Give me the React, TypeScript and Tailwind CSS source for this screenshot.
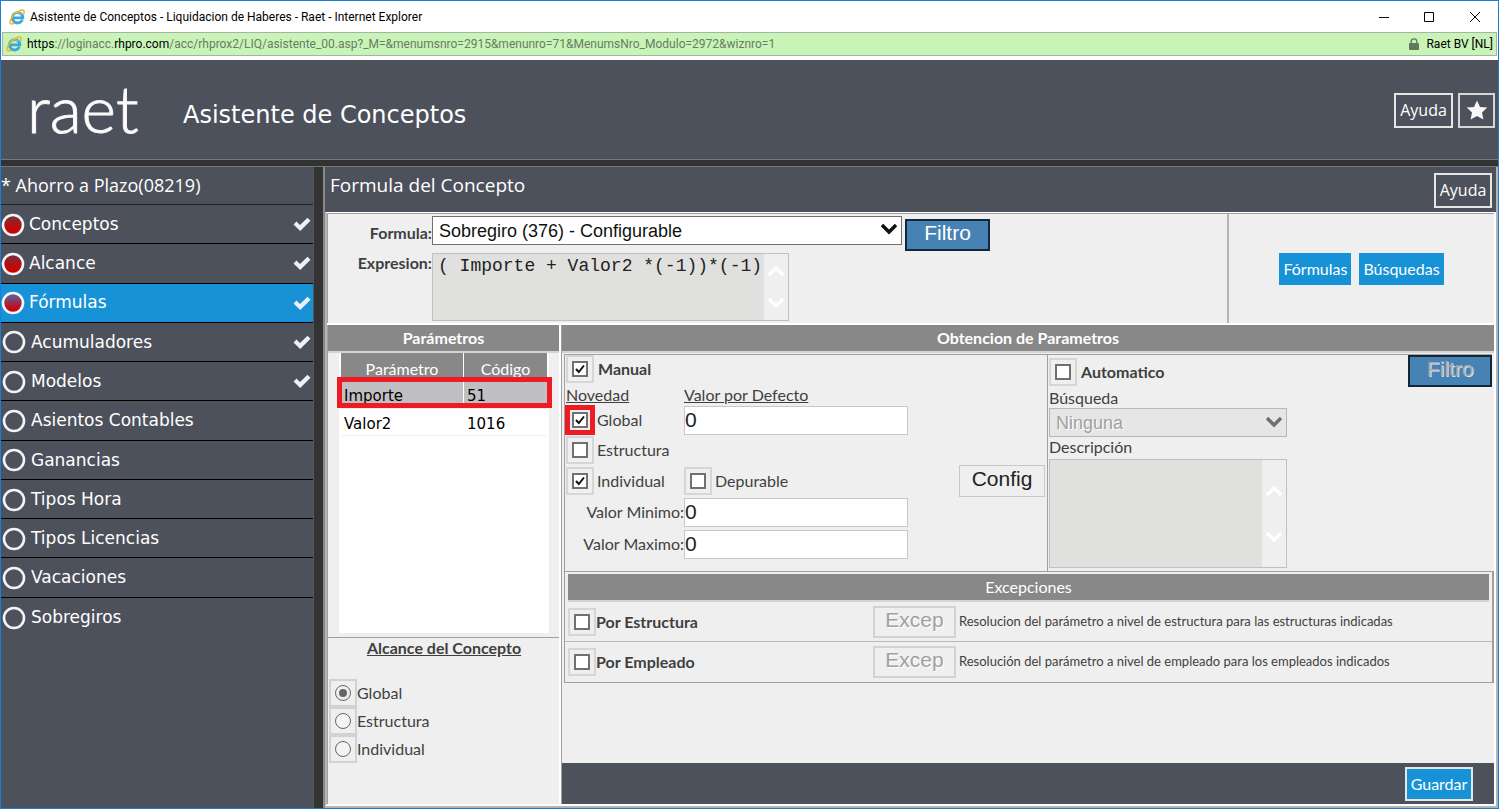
import { useState, type ReactNode } from 'react';

interface Step {
    label: string;
    state: 'done' | 'idle';
    checked: boolean;
}

const STEPS: Step[] = [
    { label: 'Conceptos', state: 'done', checked: true },
    { label: 'Alcance', state: 'done', checked: true },
    { label: 'Fórmulas', state: 'done', checked: true },
    { label: 'Acumuladores', state: 'idle', checked: true },
    { label: 'Modelos', state: 'idle', checked: true },
    { label: 'Asientos Contables', state: 'idle', checked: false },
    { label: 'Ganancias', state: 'idle', checked: false },
    { label: 'Tipos Hora', state: 'idle', checked: false },
    { label: 'Tipos Licencias', state: 'idle', checked: false },
    { label: 'Vacaciones', state: 'idle', checked: false },
    { label: 'Sobregiros', state: 'idle', checked: false },
];

const PARAMS = [
    { name: 'Importe', code: '51' },
    { name: 'Valor2', code: '1016' },
];

function ExplorerIcon() {
    return (
        <svg viewBox="0 0 16 16" className="size-4 shrink-0" fill="none" aria-hidden="true">
            <path d="M13.4 10.8A5.2 5.2 0 1 1 13.8 8.8H4.4" stroke="#3aa5de" strokeWidth="2.8" />
            <path d="M12.6 6.2A4.6 4.6 0 0 0 4.4 6" stroke="#8fdcfa" strokeWidth="1" />
            <path d="M14.6 5.2C15.6 3 15.4 1 13.4 1C9.4 1 1.2 8.4 1 13.2C1 15.2 3 15.4 5.4 14" stroke="#f2b90f" strokeWidth="1.5" />
        </svg>
    );
}

function TickIcon() {
    return (
        <svg viewBox="0 0 18 15" className="mr-[2px] h-[15px] w-[18px] shrink-0" aria-hidden="true">
            <path d="M0.5 7.5L3.5 4.5L7 8L14.5 0.8L17.5 3.8L7.2 14Z" fill="#eef0f6" />
        </svg>
    );
}

function StepDot({ state, active }: { state: Step['state']; active: boolean }) {
    return (
        <svg viewBox="0 0 24 24" className="size-6 shrink-0" aria-hidden="true">
            <defs>
                <linearGradient id="dot-red" x1="0" y1="0" x2="0" y2="1">
                    <stop offset="0.1" stopColor="#7a2e38" />
                    <stop offset="0.7" stopColor="#c90505" />
                    <stop offset="1" stopColor="#c80000" />
                </linearGradient>
                <linearGradient id="dot-active" x1="0" y1="0" x2="0" y2="1">
                    <stop offset="0.1" stopColor="#5a6098" />
                    <stop offset="0.7" stopColor="#bb1220" />
                    <stop offset="1" stopColor="#c80000" />
                </linearGradient>
            </defs>
            <circle
                cx="12"
                cy="12"
                r="10"
                stroke="#f4f4f6"
                strokeWidth="2.6"
                fill={state === 'idle' ? 'none' : active ? 'url(#dot-active)' : 'url(#dot-red)'}
            />
        </svg>
    );
}

function Chevron({ up, className }: { up?: boolean; className: string }) {
    return (
        <svg viewBox="0 0 16 12" className={className} fill="none" stroke="currentColor" strokeWidth="3.4" aria-hidden="true">
            <path d={up ? 'M1 10L8 3L15 10' : 'M1 2L8 9L15 2'} />
        </svg>
    );
}

function TickBox({ id, checked = false, marked = false }: { id: string; checked?: boolean; marked?: boolean }) {
    return (
        <span className="relative flex size-[28px] shrink-0 items-center justify-center border-2 border-[#d6d6d6] bg-[#efefef]">
            <input
                id={id}
                type="checkbox"
                defaultChecked={checked}
                className="peer size-4 appearance-none border-2 border-[#707070] bg-white"
            />
            <svg viewBox="0 0 10 10" className="pointer-events-none absolute hidden size-[10px] peer-checked:block" fill="none" aria-hidden="true">
                <path d="M1 5L3.8 8L9 1.5" stroke="#111" strokeWidth="2" />
            </svg>
            {marked && <span className="pointer-events-none absolute -inset-[3px] border-5 border-[#ed1c24]" />}
        </span>
    );
}

function GridHeader({ children, bold = true }: { children: ReactNode; bold?: boolean }) {
    return (
        <h2 className={`flex h-[28px] items-center justify-center border-b-2 border-[#d4d4d4] bg-[#888888] text-[16px] text-white ${bold ? 'font-bold' : ''}`}>
            {children}
        </h2>
    );
}

function NumberBox({ id }: { id: string }) {
    return (
        <input
            id={id}
            defaultValue="0"
            className="h-[29px] w-[224px] border border-[#c8c8c8] bg-white pb-px font-['Liberation_Sans',sans-serif] text-[21px] text-[#222]"
        />
    );
}

function ScrollColumn({ gap }: { gap: string }) {
    return (
        <div className={`flex w-[24px] flex-col items-center justify-center bg-[#efefef] text-white ${gap}`}>
            <Chevron up className="h-3 w-4" />
            <Chevron className="h-3 w-4" />
        </div>
    );
}

function ExceptionRow({ id, label, text }: { id: string; label: string; text: string }) {
    return (
        <div className="flex h-[40px] items-center border-b border-[#b8b8b8] pl-[3px] last:border-b-0">
            <TickBox id={id} />
            <label htmlFor={id} className="w-[277px] text-[16px] font-bold">{label}</label>
            <button
                type="button"
                disabled
                className="h-[32px] w-[83px] border-2 border-[#d2d2d2] pb-1 font-['Liberation_Sans',sans-serif] text-[21px] leading-6 text-[#a0a0a0] [text-shadow:1px_1px_0_white]"
            >
                Excep
            </button>
            <p className="ml-[3px] text-[13px]">{text}</p>
        </div>
    );
}

export default function App() {
    const [active, setActive] = useState('Fórmulas');

    return (
        <div className="flex min-h-screen flex-col border border-[#1a7fd4] bg-white font-['Lato',sans-serif] text-[#3f3f3f]">
            <div className="flex h-[31px] items-center pl-2 font-['Roboto',sans-serif] text-[12px] text-black">
                <ExplorerIcon />
                <span className="ml-[5px]">Asistente de Conceptos - Liquidacion de Haberes - Raet - Internet Explorer</span>
                <div className="ml-auto flex">
                    <button type="button" aria-label="Minimizar" className="flex h-[28px] w-[45px] items-center justify-center">
                        <svg viewBox="0 0 10 10" className="size-[10px]" stroke="black"><path d="M0 5.5H10" /></svg>
                    </button>
                    <button type="button" aria-label="Maximizar" className="flex h-[28px] w-[46px] items-center justify-center">
                        <svg viewBox="0 0 10 10" className="size-[10px]" stroke="black" fill="none"><path d="M.5 .5H9.5V9.5H.5Z" /></svg>
                    </button>
                    <button type="button" aria-label="Cerrar" className="flex h-[28px] w-[46px] items-center justify-center">
                        <svg viewBox="0 0 10 10" className="size-[10px]" stroke="black"><path d="M0 0L10 10M10 0L0 10" /></svg>
                    </button>
                </div>
            </div>

            <div className="mx-px mb-1 flex h-[24px] items-center border border-[#a9b3a5] bg-[#c8f4b8] px-[3px] font-['Roboto',sans-serif] text-[12px] text-[#6a7b64]">
                <ExplorerIcon />
                <span className="ml-[5px] whitespace-nowrap">
                    <span className="text-black">https</span>://loginacc.<span className="text-black">rhpro.com</span>
                    /acc/rhprox2/LIQ/asistente_00.asp?_M=&amp;menumsnro=2915&amp;menunro=71&amp;MenumsNro_Modulo=2972&amp;wiznro=1
                </span>
                <svg viewBox="0 0 10 12" className="ml-auto h-3 w-[10px] shrink-0" aria-hidden="true">
                    <rect y="5" width="10" height="7" rx="1" fill="#5f7a58" />
                    <path d="M2.2 5.5V3.4A2.8 2.6 0 0 1 7.8 3.4V5.5" stroke="#5f7a58" strokeWidth="1.3" fill="none" />
                </svg>
                <span className="ml-[7px] whitespace-nowrap text-black">Raet BV [NL]</span>
            </div>

            <header className="flex h-[99px] items-center bg-[#4d515c] pr-[3px] text-white">
                <span className="ml-[26px] w-[156px] pb-1 text-[66px] leading-[80px] font-light [-webkit-text-stroke:1px_#f4f4f6]">raet</span>
                <h1 className="pt-[10px] font-['DejaVu_Sans',sans-serif] text-[24px]">Asistente de Conceptos</h1>
                <div className="ml-auto flex gap-[5px] pt-px font-['Open_Sans',sans-serif]">
                    <button type="button" className="h-[35px] w-[59px] border-2 border-[#e6e6e6] text-[16px] leading-5">Ayuda</button>
                    <button type="button" aria-label="Favoritos" className="flex h-[35px] w-[37px] items-center justify-center border-2 border-[#d6d6d6]">
                        <svg viewBox="0 0 22 20" className="h-5 w-[22px]" fill="#f8f8f8">
                            <path d="M11 .4L14 6.9L21.3 7.6L16 12.4L17.4 19.6L11 15.9L4.6 19.6L6 12.4L.7 7.6L8 6.9Z" />
                        </svg>
                    </button>
                </div>
            </header>

            <div className="h-[8px] border-y border-[#777] bg-[#333]" />

            <div className="flex flex-1 bg-[#4d515c]">
                <nav className="w-[312px] shrink-0 text-white">
                    <p className="flex h-[38px] items-center border-b border-[#222] font-['Open_Sans',sans-serif] text-[18px]">* Ahorro a Plazo(08219)</p>
                    <ul className="grid h-[432px] auto-rows-fr font-['DejaVu_Sans',sans-serif] text-[17px]">
                        {STEPS.map((step) => (
                            <li key={step.label} className="border-b border-black last:border-b-0">
                                <button
                                    type="button"
                                    onClick={() => setActive(step.label)}
                                    className={`flex size-full items-center pt-px text-left ${active === step.label ? 'bg-[#1892d6]' : ''} ${step.state === 'idle' ? 'gap-[5px] pl-px' : 'gap-1'}`}
                                >
                                    <StepDot state={step.state} active={active === step.label} />
                                    <span className="flex-1">{step.label}</span>
                                    {step.checked && <TickIcon />}
                                </button>
                            </li>
                        ))}
                    </ul>
                </nav>
                <div className="w-[12px] shrink-0 border-r-2 border-l border-r-[#888] border-l-[#555] bg-[#333]" />

                <main className="flex min-w-0 flex-1 flex-col border-r-2 border-b-2 border-[#b4b4b4]">
                    <div className="flex h-[45px] items-center justify-between border-l border-[#4d515c] pr-1 pl-1 font-['Open_Sans',sans-serif] text-white">
                        <h2 className="pb-2 text-[19px]">Formula del Concepto</h2>
                        <button type="button" className="mt-px h-[35px] w-[58px] border-2 border-[#e6e6e6] text-[16px] leading-5">Ayuda</button>
                    </div>

                    <div className="flex flex-1 flex-col border-2 border-t border-white border-l-[#b4b4b4] bg-[#efefef]">
                        <section className="flex h-[112px] border-t border-b-2 border-t-[#a0a0a0] border-b-white">
                            <div className="flex-1 border-l border-[#a0a0a0] pt-[2px]">
                                <div className="flex h-[37px] items-start">
                                    <label htmlFor="formula" className="w-[104px] pt-[5px] text-right text-[16px] font-bold">Formula:</label>
                                    <div className="relative">
                                        <select id="formula" className="h-[29px] w-[470px] appearance-none border border-[#707070] bg-white px-[6px] font-['Liberation_Sans',sans-serif] text-[18px] leading-5 text-[#111]">
                                            <option>Sobregiro (376) - Configurable</option>
                                        </select>
                                        <Chevron className="pointer-events-none absolute top-[7px] right-[5px] h-3 w-4 text-[#111]" />
                                    </div>
                                    <button type="button" className="mt-[3px] ml-[3px] h-[32px] w-[85px] border-2 border-[#152636] bg-[#4682b4] pb-1 font-['Liberation_Sans',sans-serif] text-[21px] leading-6 text-white">
                                        Filtro
                                    </button>
                                </div>
                                <div className="flex items-start">
                                    <label htmlFor="expresion" className="w-[104px] text-right text-[16px] leading-5 font-bold">Expresion:</label>
                                    <div className="flex h-[68px] w-[357px] border border-[#c0c0c0]">
                                        <textarea
                                            id="expresion"
                                            readOnly
                                            defaultValue="( Importe + Valor2 *(-1))*(-1)"
                                            className="min-w-0 flex-1 resize-none overflow-hidden bg-[#e0e0df] pl-[5px] font-['Liberation_Mono',monospace] text-[18px] leading-6 whitespace-nowrap text-[#222]"
                                        />
                                        <ScrollColumn gap="gap-5" />
                                    </div>
                                </div>
                            </div>
                            <div className="flex w-[267px] items-center justify-center gap-2 border-l-2 border-[#b4b4b4] text-[16px] text-white">
                                <button type="button" className="h-[32px] bg-[#1892d6] px-1">Fórmulas</button>
                                <button type="button" className="h-[32px] bg-[#1892d6] px-1">Búsquedas</button>
                            </div>
                        </section>

                        <div className="flex flex-1">
                            <section className="flex w-[234px] shrink-0 flex-col border-r-2 border-l border-r-white border-l-[#a0a0a0]">
                                <GridHeader>Parámetros</GridHeader>
                                <div className="relative mr-[10px] ml-[11px] h-[280px] bg-white px-px">
                                    <table className="w-full table-fixed border-separate border-spacing-x-[1px] border-spacing-y-0 font-['DejaVu_Sans',sans-serif] text-[15px] text-black">
                                        <thead>
                                            <tr className="h-[28px] bg-[#888888] font-['Lato',sans-serif] text-[16px] text-white">
                                                <th className="w-[122px] pt-1 font-normal">Parámetro</th>
                                                <th className="pt-1 font-normal">Código</th>
                                            </tr>
                                        </thead>
                                        <tbody>
                                            {PARAMS.map((param) => (
                                                <tr key={param.name} className="h-[27px] first:bg-[#c0c0c2]">
                                                    <td className="border-b border-[#efefef] p-0 pt-1 pl-[3px]">{param.name}</td>
                                                    <td className="border-b border-[#efefef] p-0 pt-1 pl-[3px]">{param.code}</td>
                                                </tr>
                                            ))}
                                        </tbody>
                                    </table>
                                    <span className="pointer-events-none absolute top-[24px] -right-[3px] -left-[2px] h-[31px] border-5 border-[#ed1c24]" />
                                </div>
                                <fieldset className="mt-1 border-t border-[#a0a0a0] pl-px text-[16px]">
                                    <h3 className="mb-[21px] text-center leading-5 font-bold underline">Alcance del Concepto</h3>
                                    {['Global', 'Estructura', 'Individual'].map((scope, i) => (
                                        <label key={scope} className="flex h-[28px] items-center">
                                            <span className="flex size-[28px] items-center justify-center border-2 border-[#d2d2d2]">
                                                <input
                                                    type="radio"
                                                    name="alcance"
                                                    defaultChecked={i === 0}
                                                    className="size-4 appearance-none rounded-full border border-[#666] bg-[#f4f4f4] p-[3px] checked:bg-[#666] checked:bg-clip-content"
                                                />
                                            </span>
                                            {scope}
                                        </label>
                                    ))}
                                </fieldset>
                            </section>

                            <section className="flex min-w-0 flex-1 flex-col border-l border-[#a0a0a0]">
                                <GridHeader>Obtencion de Parametros</GridHeader>
                                <div className="mt-px flex h-[217px] pr-[2px] pl-[2px]">
                                    <div className="flex-1 border-t border-l border-[#a0a0a0] pl-px text-[16px]">
                                        <div className="flex items-center gap-1">
                                            <TickBox id="manual" checked />
                                            <label htmlFor="manual" className="leading-6 font-bold">Manual</label>
                                        </div>
                                        <div className="flex h-[22px] leading-6 underline">
                                            <span className="w-[118px]">Novedad</span>
                                            <label htmlFor="defecto">Valor por Defecto</label>
                                        </div>
                                        <div className="flex h-[30px] items-center">
                                            <TickBox id="global" checked marked />
                                            <label htmlFor="global" className="w-[90px] pl-[3px]">Global</label>
                                            <NumberBox id="defecto" />
                                        </div>
                                        <div className="flex h-[30px] items-center">
                                            <TickBox id="estructura" />
                                            <label htmlFor="estructura" className="pl-[3px]">Estructura</label>
                                        </div>
                                        <div className="flex h-[31px] items-center">
                                            <TickBox id="individual" checked />
                                            <label htmlFor="individual" className="w-[90px] pl-[3px]">Individual</label>
                                            <TickBox id="depurable" />
                                            <label htmlFor="depurable" className="pl-[3px]">Depurable</label>
                                            <button type="button" className="mr-[2px] ml-auto h-[32px] w-[86px] border border-[#c8c8c8] pb-1 font-['Liberation_Sans',sans-serif] text-[21px] leading-6 text-[#222]">
                                                Config
                                            </button>
                                        </div>
                                        <div className="flex h-[32px] items-center">
                                            <label htmlFor="minimo" className="w-[118px] text-right">Valor Minimo:</label>
                                            <NumberBox id="minimo" />
                                        </div>
                                        <div className="flex h-[32px] items-center">
                                            <label htmlFor="maximo" className="w-[118px] text-right">Valor Maximo:</label>
                                            <NumberBox id="maximo" />
                                        </div>
                                    </div>

                                    <div className="flex w-[445px] items-start justify-between border-t border-l border-[#a0a0a0] text-[16px]">
                                        <div className="pl-px">
                                            <div className="flex items-center gap-1 pt-[3px]">
                                                <TickBox id="automatico" />
                                                <label htmlFor="automatico" className="font-bold">Automatico</label>
                                            </div>
                                            <label htmlFor="busqueda" className="block h-[22px] leading-6">Búsqueda</label>
                                            <div className="relative">
                                                <select id="busqueda" disabled className="h-[29px] w-[238px] appearance-none border border-[#b8b8b8] bg-[#e6e6e6] px-[6px] font-['Liberation_Sans',sans-serif] text-[18px] leading-5 text-[#a0a0a0] opacity-100 [text-shadow:1px_1px_0_white]">
                                                    <option>Ninguna</option>
                                                </select>
                                                <Chevron className="pointer-events-none absolute top-2 right-[5px] h-3 w-4 text-[#707070]" />
                                            </div>
                                            <label htmlFor="descripcion" className="block h-[22px] leading-5">Descripción</label>
                                            <div className="flex h-[109px] w-[238px] border border-[#c0c0c0]">
                                                <textarea id="descripcion" readOnly className="min-w-0 flex-1 resize-none bg-[#e0e0df]" />
                                                <ScrollColumn gap="gap-[34px]" />
                                            </div>
                                        </div>
                                        <button
                                            type="button"
                                            disabled
                                            className="h-[32px] w-[84px] border-2 border-[#152636] bg-[#4682b4] pb-1 font-['Liberation_Sans',sans-serif] text-[21px] leading-6 text-[#a9a9a9] [text-shadow:1px_1px_0_#d8e4ee]"
                                        >
                                            Filtro
                                        </button>
                                    </div>
                                </div>

                                <div className="ml-[2px] border border-r-2 border-[#a0a0a0]">
                                    <div className="px-[3px] pt-[2px]">
                                        <GridHeader bold={false}>Excepciones</GridHeader>
                                    </div>
                                    <ExceptionRow id="por-estructura" label="Por Estructura" text="Resolucion del parámetro a nivel de estructura para las estructuras indicadas" />
                                    <ExceptionRow id="por-empleado" label="Por Empleado" text="Resolución del parámetro a nivel de empleado para los empleados indicados" />
                                </div>

                                <footer className="mt-auto flex h-[41px] items-center justify-end bg-[#4d515c] pr-[21px]">
                                    <button type="button" className="h-[34px] w-[68px] border-2 border-[#e6e6e6] bg-[#1892d6] text-[16px] text-white">Guardar</button>
                                </footer>
                            </section>
                        </div>
                    </div>
                </main>
            </div>
        </div>
    );
}
